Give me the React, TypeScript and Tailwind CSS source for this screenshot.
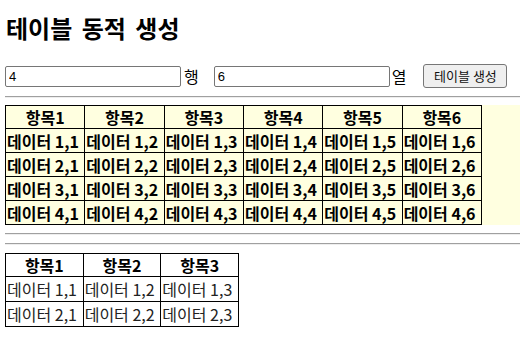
import React from 'react';

const headers = (n: number) => Array.from({ length: n }, (_, i) => `항목${i + 1}`);

function Rule() {
  return <div className="h-[2px] border-t border-t-[#a0a0a0] border-b border-b-[#eeeeee]" />;
}

export default function App() {
  const rows = 4;
  const cols = 6;

  return (
    <div
      className="w-[520px] h-[347px] overflow-hidden bg-white pl-[5px] text-black text-[16px]"
      style={{ fontFamily: '"Noto Sans CJK KR", "Liberation Sans", sans-serif' }}
    >
      <h1 className="pt-[11px] pl-[1px] text-[24px] leading-[34px] font-bold [word-spacing:4px]">테이블 동적 생성</h1>

      {/* controls */}
      <div className="mt-[19px] flex items-center h-[24px]">
        <input
          readOnly
          value="4"
          className="w-[176px] h-[21px] border border-[#767676] rounded-[2px] px-[3px] text-[13px] outline-none"
          style={{ fontFamily: '"Liberation Sans", sans-serif' }}
        />
        <span className="ml-[3px] leading-[20px]">행</span>
        <input
          readOnly
          value="6"
          className="ml-[15px] w-[176px] h-[21px] border border-[#767676] rounded-[2px] px-[3px] text-[13px] outline-none"
          style={{ fontFamily: '"Liberation Sans", sans-serif' }}
        />
        <span className="ml-[2px] leading-[20px]">열</span>
        <button className="ml-[17px] w-[84px] h-[24px] border border-[#767676] rounded-[3px] bg-[#efefef] text-[13px] text-[#111]">
          테이블 생성
        </button>
      </div>

      <div className="mt-[8px]">
        <Rule />
      </div>

      {/* generated table */}
      <div className="mt-[7px] bg-[#ffffe0]">
        <table className="w-[477px] table-fixed border-collapse font-bold">
          <thead>
            <tr>
              {headers(cols).map(h => (
                <th key={h} className="border border-black h-[23px] p-0 text-center leading-[21px]">{h}</th>
              ))}
            </tr>
          </thead>
          <tbody>
            {Array.from({ length: rows }, (_, r) => (
              <tr key={r}>
                {Array.from({ length: cols }, (_, c) => (
                  <td key={c} className="border border-black h-[24px] px-[1px] py-0 leading-[22px] whitespace-nowrap">
                    데이터 {r + 1},{c + 1}
                  </td>
                ))}
              </tr>
            ))}
          </tbody>
        </table>
      </div>

      <div className="mt-[8px]">
        <Rule />
      </div>
      <div className="mt-[8px]">
        <Rule />
      </div>

      {/* default table */}
      <table className="mt-[8px] w-[234px] table-fixed border-collapse">
        <thead>
          <tr>
            {headers(3).map(h => (
              <th key={h} className="border border-black h-[23px] p-0 text-center font-bold leading-[21px]">{h}</th>
            ))}
          </tr>
        </thead>
        <tbody>
          {Array.from({ length: 2 }, (_, r) => (
            <tr key={r}>
              {Array.from({ length: 3 }, (_, c) => (
                <td key={c} className="border border-black h-[25px] px-[1px] py-0 leading-[22px] whitespace-nowrap text-[#222]">
                  데이터 {r + 1},{c + 1}
                </td>
              ))}
            </tr>
          ))}
        </tbody>
      </table>
    </div>
  );
}
